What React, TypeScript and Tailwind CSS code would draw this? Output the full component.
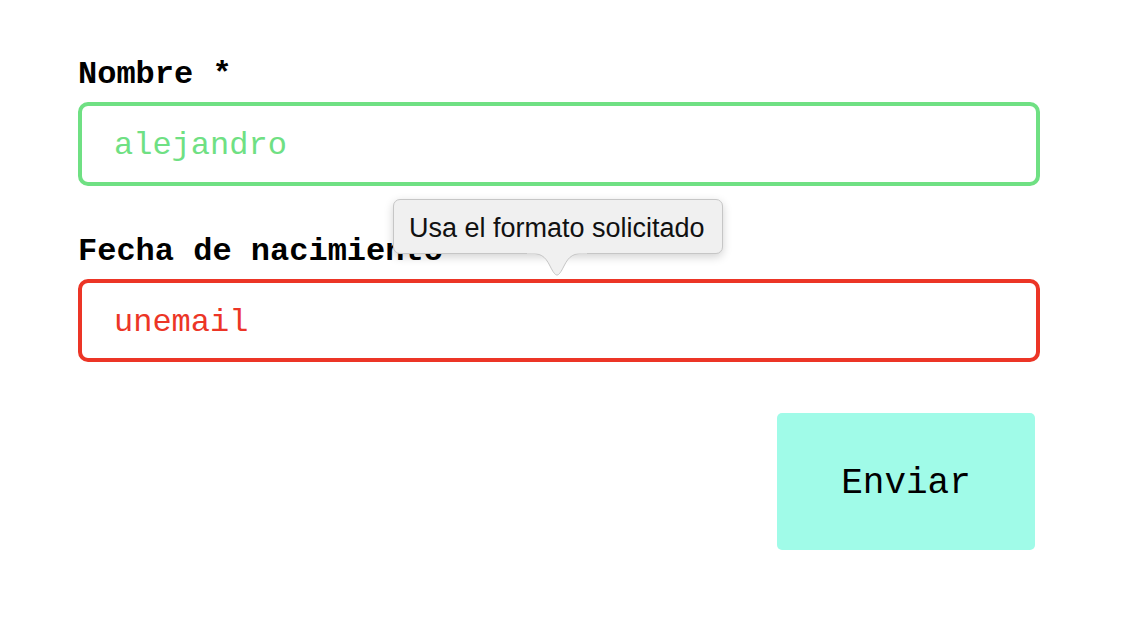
import React from "react";

const mono = { fontFamily: '"Liberation Mono", "Courier New", monospace' };

function Tooltip() {
  return (
    <div className="absolute left-[393px] top-[199px] w-[330px]">
      <div
        className="relative z-10 h-[55px] rounded-[7px] border border-[#c6c6c6] bg-[#f0f0f0] pl-[15px] pt-[3px] text-[27px] leading-[50px] text-[#111] shadow-[0_3px_10px_rgba(0,0,0,0.18)]"
        style={{ fontFamily: '"Liberation Sans", Arial, sans-serif' }}
      >
        Usa el formato solicitado
      </div>
      <svg
        className="absolute left-[134px] top-[53px] z-20"
        width="60"
        height="26"
        viewBox="0 0 60 26"
      >
        <path
          d="M0 1 C14 1 18 4 23 14 C26 20 28 23 30 23 C32 23 34 20 37 14 C42 4 46 1 60 1"
          fill="#f0f0f0"
          stroke="#c6c6c6"
          strokeWidth="1"
        />
        <rect x="0" y="0" width="60" height="1.5" fill="#f0f0f0" />
      </svg>
    </div>
  );
}

export default function App() {
  return (
    <div className="relative h-[620px] w-[1130px] bg-white">
      <form className="flex w-[962px] flex-col pl-[78px] pt-[55px] box-content">
        <label className="block text-[32px] font-bold leading-[40px] text-black" style={mono}>
          Nombre *
        </label>
        <div className="mt-[7px] flex h-[84px] items-center rounded-[10px] border-4 border-[#6fe083] px-[32px] pt-[4px]">
          <span className="text-[32px] leading-none text-[#6fe083]" style={mono}>
            alejandro
          </span>
        </div>

        <label className="mt-[46px] block text-[32px] font-bold leading-[40px] text-black" style={mono}>
          Fecha de nacimiento
        </label>
        <div className="mt-[7px] flex h-[83px] items-center rounded-[10px] border-4 border-[#ec3526] px-[32px] pt-[4px]">
          <span className="text-[32px] leading-none text-[#ec3526]" style={mono}>
            unemail
          </span>
        </div>

        <div className="mt-[51px] flex justify-end pr-[5px]">
          <button
            type="button"
            className="flex h-[137px] w-[258px] items-center justify-center rounded-[5px] bg-[#a0fbe8] pt-[5px] text-[36px] text-black"
            style={mono}
          >
            Enviar
          </button>
        </div>
      </form>
      <Tooltip />
    </div>
  );
}
